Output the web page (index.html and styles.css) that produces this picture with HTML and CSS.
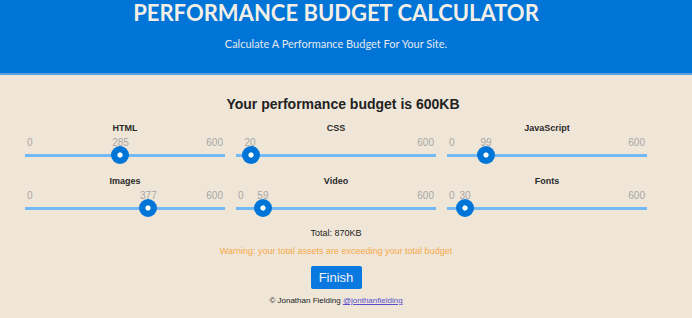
FILE: index.html
```html
<!DOCTYPE html>
<html lang="en">
<head>
  <meta charset="UTF-8" />
  <title>Performance Budget Calculator</title>
  <link rel="stylesheet" href="styles.css">
</head>
<body>
  <header>
    <h1>PERFORMANCE BUDGET CALCULATOR</h1>
    <p>Calculate A Performance Budget For Your Site.</p>
  </header>

  <main class="content">
    <h2>Your performance budget is 600KB</h2>

    <div class="controls">
      <div class="control">
        <label>HTML</label>
        <div class="scale"><span>0</span><span class="value" style="left: 95.5px">285</span><span>600</span></div>
        <input type="range" min="0" max="600" value="285">
      </div>
      <div class="control">
        <label>CSS</label>
        <div class="scale"><span class="covered">0</span><span class="value" style="left: 14px">20</span><span>600</span></div>
        <input type="range" min="0" max="600" value="20">
      </div>
      <div class="control">
        <label>JavaScript</label>
        <div class="scale"><span>0</span><span class="value" style="left: 39px">99</span><span>600</span></div>
        <input type="range" min="0" max="600" value="99">
      </div>
      <div class="control">
        <label>Images</label>
        <div class="scale"><span>0</span><span class="value" style="left: 123.4px">377</span><span>600</span></div>
        <input type="range" min="0" max="600" value="377">
      </div>
      <div class="control">
        <label>Video</label>
        <div class="scale"><span>0</span><span class="value" style="left: 26.9px">59</span><span>600</span></div>
        <input type="range" min="0" max="600" value="59">
      </div>
      <div class="control">
        <label>Fonts</label>
        <div class="scale"><span>0</span><span class="value" style="left: 18px">30</span><span>600</span></div>
        <input type="range" min="0" max="600" value="30">
      </div>
    </div>

    <p class="total">Total: 870KB</p>
    <p class="warning">Warning: your total assets are exceeding your total budget</p>
    <button class="finish">Finish</button>
  </main>

  <footer>
    &copy; Jonathan Fielding <a href="#">@jonthanfielding</a>
  </footer>
</body>
</html>
```

FILE: styles.css
```css
* { box-sizing: border-box; margin: 0; padding: 0; }
body {
  background-color: #f0e6d8;
  color: #222;
  font-family: "Liberation Sans", Arial, sans-serif;
}
header {
  background-color: #0074d7;
  border-bottom: 2px solid #5a9fe2;
  color: #f3efe6;
  font-family: Lato, sans-serif;
  height: 75px;
  padding-right: 20px;
  text-align: center;
}
header h1 {
  font-size: 22px;
  font-weight: 700;
  line-height: 26px;
}
header p {
  color: #e4e9ee;
  font-size: 11px;
  line-height: 14px;
  margin-top: 11px;
}
.content {
  text-align: center;
  width: 672px;
}
.content h2 {
  font-size: 14px;
  line-height: 16px;
  margin-top: 21px;
  padding-left: 14px;
}
.controls {
  display: grid;
  grid-template-columns: repeat(3, 200px);
  column-gap: 11px;
  justify-content: center;
  margin-top: 10px;
}
.control {
  height: 53px;
}
.control label {
  color: #2a2a2a;
  display: block;
  font-size: 9px;
  font-weight: 700;
  line-height: 12px;
}
.scale {
  color: #a6a6a6;
  display: flex;
  font-size: 10px;
  justify-content: space-between;
  line-height: 12px;
  margin-top: 3px;
  padding: 0 2px;
  position: relative;
}
.scale .covered {
  visibility: hidden;
}
.scale .value {
  position: absolute;
  top: 0;
  transform: translateX(-50%);
}
input[type=range] {
  -webkit-appearance: none;
  appearance: none;
  background: transparent;
  display: block;
  height: 18px;
  margin: -3px 0 0;
  width: 200px;
}
input[type=range]::-webkit-slider-runnable-track {
  background: #72b9f6;
  height: 3px;
}
input[type=range]::-webkit-slider-thumb {
  -webkit-appearance: none;
  background: radial-gradient(circle, #fff 0, #fff 2.2px, #0075d8 3px);
  border-radius: 50%;
  height: 18px;
  margin-top: -7.5px;
  width: 18px;
}
.total {
  font-size: 9px;
  line-height: 11px;
}
.warning {
  color: #f6a947;
  font-size: 9px;
  line-height: 11px;
  margin-top: 7px;
}
.finish {
  background-color: #0a79df;
  border: none;
  border-radius: 2px;
  color: #f2f2f2;
  display: block;
  font-family: "Liberation Sans", Arial, sans-serif;
  font-size: 13px;
  height: 23px;
  margin: 9px auto 0;
  width: 51px;
}
footer {
  font-size: 8px;
  line-height: 10px;
  margin-top: 7px;
  text-align: center;
  width: 672px;
}
a {
  color: #5a4fd0;
}
```
